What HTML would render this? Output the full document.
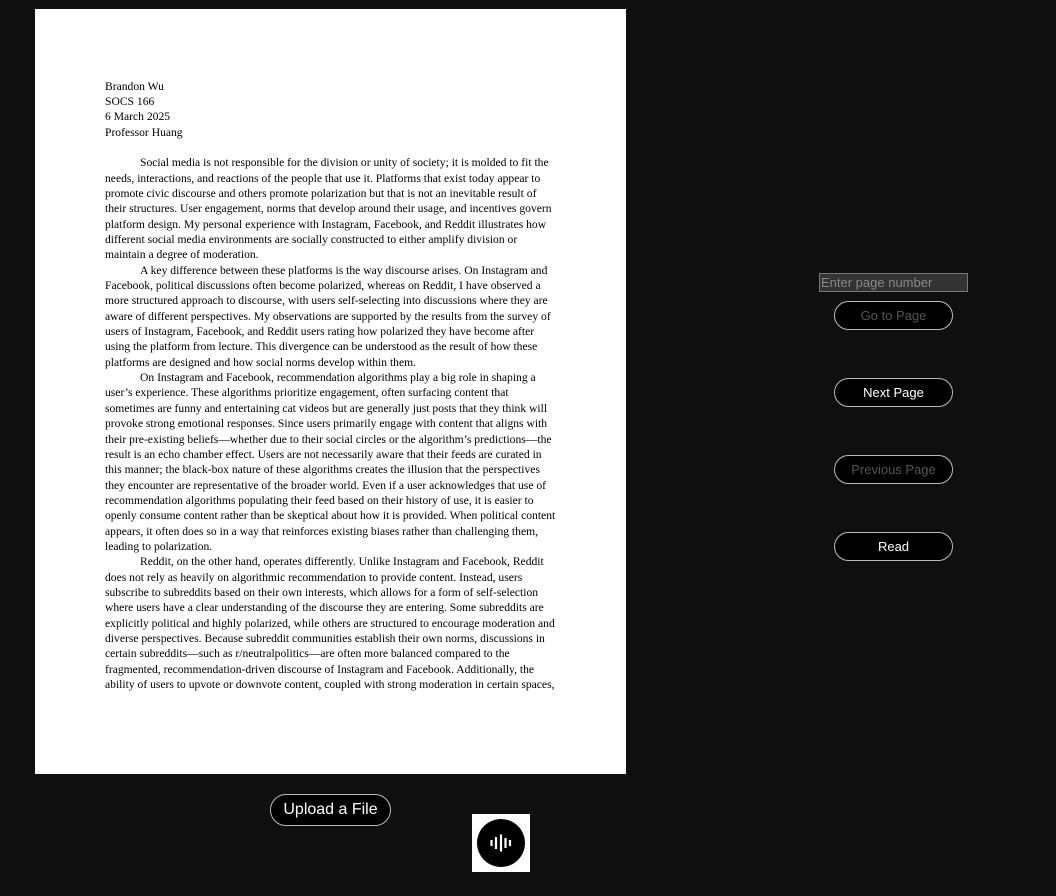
<!DOCTYPE html>
<html><head><meta charset="utf-8"><style>
html,body{margin:0;padding:0;background:#0f0f0f;width:1056px;height:896px;overflow:hidden;font-family:"Liberation Sans",sans-serif}
.page{position:absolute;left:35px;top:9px;width:591px;height:765px;background:#fff}
.doc{position:absolute;left:70px;top:70px;font-family:"Liberation Serif",serif;font-size:11.6px;color:#000;line-height:15.35px;white-space:nowrap}
.h{line-height:15.2px}
.i{padding-left:35px}
.btn{position:absolute;box-sizing:border-box;border:1px solid #bbb;border-radius:15px;background:#000;color:#fff;font-size:13px;text-align:center;width:119px;height:29px;line-height:27px;left:834px}
.dim{color:#555}
input{position:absolute;left:819px;top:273px;width:149px;height:19px;box-sizing:border-box;background:#333;border:1px solid #777;color:#888;font-family:"Liberation Sans",sans-serif;font-size:13px;padding:0 1px;line-height:17px}
input::placeholder{color:#888}
</style></head><body>
<div class="page"><div class="doc">
<div class="h">Brandon Wu</div>
<div class="h">SOCS 166</div>
<div class="h">6 March 2025</div>
<div class="h">Professor Huang</div>
<div style="height:15.5px"></div>
<div class="i">Social media is not responsible for the division or unity of society; it is molded to fit the</div>
<div>needs, interactions, and reactions of the people that use it. Platforms that exist today appear to</div>
<div>promote civic discourse and others promote polarization but that is not an inevitable result of</div>
<div>their structures. User engagement, norms that develop around their usage, and incentives govern</div>
<div>platform design. My personal experience with Instagram, Facebook, and Reddit illustrates how</div>
<div>different social media environments are socially constructed to either amplify division or</div>
<div>maintain a degree of moderation.</div>
<div class="i">A key difference between these platforms is the way discourse arises. On Instagram and</div>
<div>Facebook, political discussions often become polarized, whereas on Reddit, I have observed a</div>
<div>more structured approach to discourse, with users self-selecting into discussions where they are</div>
<div>aware of different perspectives. My observations are supported by the results from the survey of</div>
<div>users of Instagram, Facebook, and Reddit users rating how polarized they have become after</div>
<div>using the platform from lecture. This divergence can be understood as the result of how these</div>
<div>platforms are designed and how social norms develop within them.</div>
<div class="i">On Instagram and Facebook, recommendation algorithms play a big role in shaping a</div>
<div>user’s experience. These algorithms prioritize engagement, often surfacing content that</div>
<div>sometimes are funny and entertaining cat videos but are generally just posts that they think will</div>
<div>provoke strong emotional responses. Since users primarily engage with content that aligns with</div>
<div>their pre-existing beliefs—whether due to their social circles or the algorithm’s predictions—the</div>
<div>result is an echo chamber effect. Users are not necessarily aware that their feeds are curated in</div>
<div>this manner; the black-box nature of these algorithms creates the illusion that the perspectives</div>
<div>they encounter are representative of the broader world. Even if a user acknowledges that use of</div>
<div>recommendation algorithms populating their feed based on their history of use, it is easier to</div>
<div>openly consume content rather than be skeptical about how it is provided. When political content</div>
<div>appears, it often does so in a way that reinforces existing biases rather than challenging them,</div>
<div>leading to polarization.</div>
<div class="i">Reddit, on the other hand, operates differently. Unlike Instagram and Facebook, Reddit</div>
<div>does not rely as heavily on algorithmic recommendation to provide content. Instead, users</div>
<div>subscribe to subreddits based on their own interests, which allows for a form of self-selection</div>
<div>where users have a clear understanding of the discourse they are entering. Some subreddits are</div>
<div>explicitly political and highly polarized, while others are structured to encourage moderation and</div>
<div>diverse perspectives. Because subreddit communities establish their own norms, discussions in</div>
<div>certain subreddits—such as r/neutralpolitics—are often more balanced compared to the</div>
<div>fragmented, recommendation-driven discourse of Instagram and Facebook. Additionally, the</div>
<div>ability of users to upvote or downvote content, coupled with strong moderation in certain spaces,</div>
</div></div>
<input placeholder="Enter page number">
<div class="btn dim" style="top:301px">Go to Page</div>
<div class="btn" style="top:378px">Next Page</div>
<div class="btn dim" style="top:455px">Previous Page</div>
<div class="btn" style="top:532px">Read</div>
<div class="btn" style="left:270px;top:794px;width:121px;height:32px;line-height:30px;font-size:16px;border-radius:16px">Upload a File</div>
<div style="position:absolute;left:472px;top:814px;width:58px;height:58px;background:#fff">
<svg width="58" height="58" viewBox="0 0 58 58"><circle cx="29" cy="29" r="24" fill="#000"/>
<g stroke="#fff" stroke-width="2.2" stroke-linecap="butt">
<line x1="19.5" y1="26" x2="19.5" y2="32"/><line x1="24" y1="23" x2="24" y2="35"/><line x1="29" y1="20.5" x2="29" y2="37.5"/><line x1="33.5" y1="24" x2="33.5" y2="34"/><line x1="38" y1="26" x2="38" y2="32"/></g></svg>
</div>
</body></html>
